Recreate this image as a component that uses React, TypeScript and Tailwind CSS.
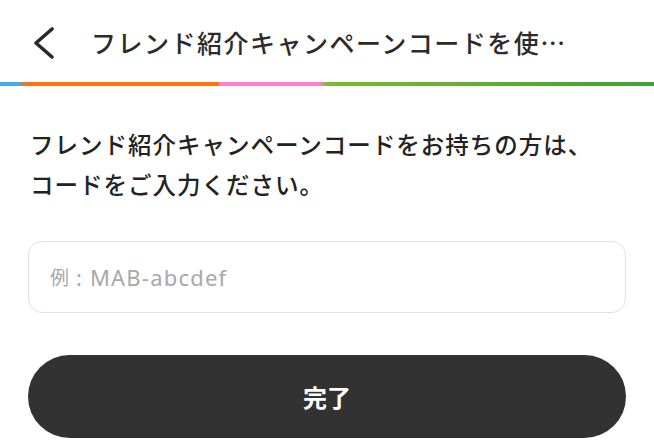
export default function App() {
  return (
    <main
      className="h-[448px] w-full overflow-hidden bg-white text-[#222]"
      style={{ fontFamily: '"Noto Sans CJK JP", "Noto Sans", sans-serif' }}
    >
      <header className="flex h-[82px] items-center pt-[4px]">
        <button className="ml-[32px] flex h-[32px] w-[23px] items-center justify-center">
          <svg width="23" height="32" viewBox="0 0 23 32" fill="none">
            <polyline
              points="20,2 4,16 20,30"
              stroke="#2a2a2a"
              strokeWidth="3.6"
              strokeLinecap="round"
              strokeLinejoin="round"
            />
          </svg>
        </button>
        <h1 className="ml-[36px] text-[25px] font-medium tracking-[1.5px] text-[#2b2b2b]">
          フレンド紹介キャンペーンコードを使…
        </h1>
      </header>

      <div className="h-[4px] w-full bg-[linear-gradient(to_right,#4aa8f0_0%,#4aa8f0_2.6%,#ff7212_4%,#ff7212_33.4%,#ff80d6_33.6%,#ff80d6_48.8%,#7cbb2a_50%,#3da233_100%)]" />

      <p className="mt-[38px] px-[30px] text-[23.5px] font-medium leading-[40px] tracking-[1px]">
        フレンド紹介キャンペーンコードをお持ちの方は、
        <br />
        コードをご入力ください。
      </p>

      <div className="mx-[28px] mt-[37px] flex h-[72px] items-center rounded-[14px] border-[1.5px] border-[#e2e2e2] pl-[21px]">
        <span className="text-[19px] text-[#a8a8a8]">例</span>
        <span
          className="whitespace-pre text-[22px] tracking-[1.2px] text-[#a8a8a8]"
          style={{ fontFamily: '"Noto Sans", sans-serif' }}
        >
          {" : MAB-abcdef"}
        </span>
      </div>

      <button className="mx-[28px] mt-[42px] flex h-[83px] w-[calc(100%-56px)] items-center justify-center rounded-full bg-[#323232] text-[24px] font-bold text-white">
        完了
      </button>
    </main>
  );
}
